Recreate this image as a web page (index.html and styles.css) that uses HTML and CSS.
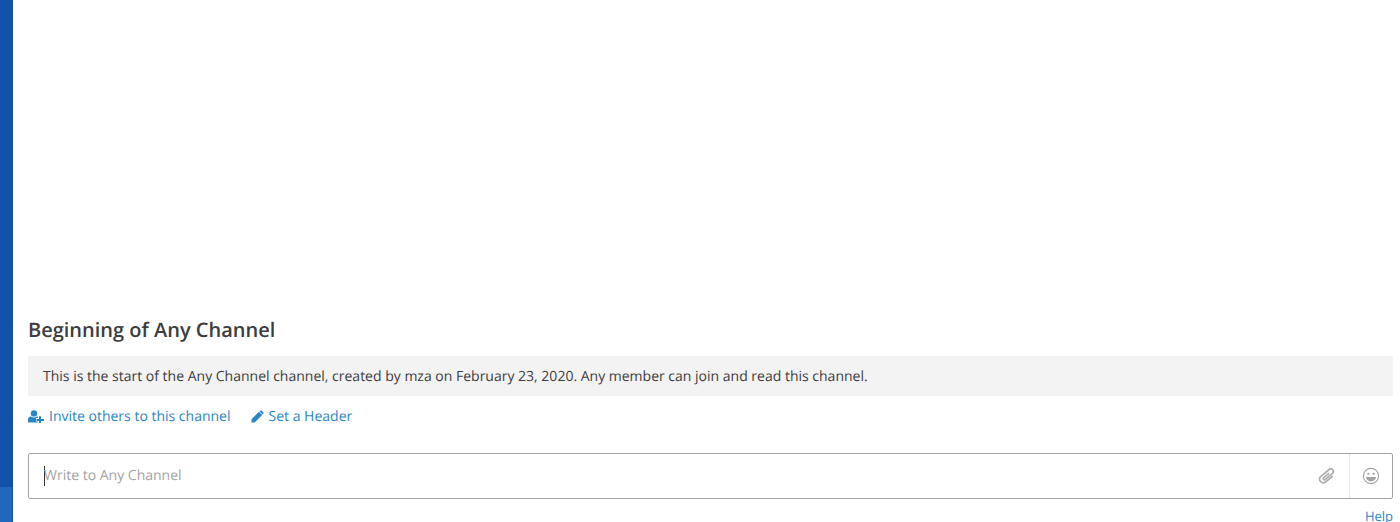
FILE: index.html
```html
<!DOCTYPE html>
<html lang="en">
<head>
    <meta charset="UTF-8">
    <title>Any Channel</title>
    <link rel="stylesheet" href="styles.css">
</head>
<body>
    <div class="app">
        <aside class="sidebar">
            <div class="sidebar-footer"></div>
        </aside>
        <main class="channel">
            <div class="intro">
                <h2 class="intro-title">Beginning of Any Channel</h2>
                <p class="intro-text">This is the start of the Any Channel channel, created by mza on February 23, 2020. Any member can join and read this channel.</p>
                <div class="intro-actions">
                    <a class="intro-link" href="#">
                        <svg class="icon-invite" viewBox="0 0 16 13" width="16" height="13" aria-hidden="true">
                            <circle cx="6" cy="3.4" r="3.2" fill="currentColor"/>
                            <path d="M0 12.500V9.600C0 7.800 1.400 6.600 3 6.600c.8.7 1.900 1 3 1s2.200-.3 3-1c.3 0 .6.100.9.200V8H8v3.500h1.900v1z" fill="currentColor"/>
                            <path d="M11 6.200h2v2.700h3v2h-3v2.700h-2v-2.700H8.500v-2H11z" fill="currentColor"/>
                        </svg>
                        <span>Invite others to this channel</span>
                    </a>
                    <a class="intro-link" href="#">
                        <svg class="icon-pencil" viewBox="0 0 13 13" width="13" height="13" aria-hidden="true">
                            <path d="M0.500 9.300L8 1.800l3.200 3.200-7.500 7.500H0.500zM8.900 0.900c.6-.6 1.400-.6 2 0l1.200 1.200c.6.6.6 1.400 0 2l-.4.400-3.200-3.200z" fill="currentColor"/>
                        </svg>
                        <span>Set a Header</span>
                    </a>
                </div>
            </div>
            <div class="composer">
                <div class="composer-input">
                    <span class="caret"></span>
                    <span class="placeholder">Write to Any Channel</span>
                </div>
                <div class="composer-attach">
                    <svg class="icon-clip" viewBox="-1 -1 20 20" width="18" height="18" aria-hidden="true">
                        <path transform="rotate(50 9 9)" d="M13 5V14.500a4 4 0 0 1-8 0V2.500a2.800 2.800 0 0 1 5.600 0V13a1.300 1.300 0 0 1-2.600 0V6" fill="none" stroke="currentColor" stroke-width="2" stroke-linecap="round"/>
                    </svg>
                </div>
                <div class="composer-emoji">
                    <svg viewBox="0 0 18 18" width="18" height="18" aria-hidden="true">
                        <circle cx="9" cy="9" r="7.600" fill="none" stroke="currentColor" stroke-width="1.100"/>
                        <circle cx="6.300" cy="6.800" r="1.100" fill="currentColor"/>
                        <circle cx="11.700" cy="6.800" r="1.100" fill="currentColor"/>
                        <path d="M4 10h10c0 2.600-2.200 4.300-5 4.300S4 12.600 4 10z" fill="currentColor"/>
                    </svg>
                </div>
            </div>
            <div class="composer-footer">
                <a class="help-link" href="#">Help</a>
            </div>
        </main>
    </div>
</body>
</html>
```

FILE: styles.css
```css
* {
    margin: 0;
    padding: 0;
    box-sizing: border-box;
}
html, body {
    height: 100%;
    overflow: hidden;
}
body {
    font-family: 'Open Sans', sans-serif;
    font-size: 14px;
    color: #3d3c40;
    background: #fff;
    text-rendering: geometricPrecision;
}
a {
    color: #2a85c8;
    text-decoration: none;
}
.app {
    display: flex;
    height: 522px;
    overflow: hidden;
}
.sidebar {
    flex: 0 0 13px;
    display: flex;
    flex-direction: column;
    justify-content: flex-end;
    background: #1153ab;
    border-right: 1px solid #1a4f96;
}
.sidebar-footer {
    height: 35px;
    background: #2167bf;
}
.channel {
    flex: 1;
    min-width: 0;
    display: flex;
    flex-direction: column;
    justify-content: flex-end;
    padding: 0 7px 0 15px;
}
.intro-title {
    font-size: 20px;
    font-weight: 600;
    line-height: 27px;
    margin-bottom: 13px;
}
.intro-text {
    height: 40px;
    padding: 1px 15px 0;
    line-height: 40px;
    background: #f3f3f3;
    border-radius: 2px;
}
.intro-actions {
    display: flex;
    gap: 20px;
    height: 40px;
    align-items: center;
    margin-bottom: 17px;
}
.intro-link {
    display: flex;
    align-items: center;
    gap: 5px;
}
.composer {
    display: flex;
    height: 46px;
    border: 1px solid #a3a3a3;
    border-radius: 2px;
}
.composer-input {
    flex: 1;
    display: flex;
    align-items: center;
    padding-left: 15px;
    padding-bottom: 1px;
}
.caret {
    width: 1px;
    height: 20px;
    background: #333;
}
.placeholder {
    margin-left: -1px;
    color: #a3a3a3;
}
.composer-attach {
    display: flex;
    align-items: center;
    justify-content: center;
    width: 44px;
    color: #b0b0b0;
}
.composer-emoji {
    display: flex;
    align-items: center;
    justify-content: center;
    width: 43px;
    border-left: 1px solid #e6e6e6;
    color: #a3a3a3;
}
.composer-footer {
    display: flex;
    justify-content: flex-end;
    height: 23px;
    padding-top: 8px;
    line-height: 19px;
    font-size: 13px;
}
.help-link {
    display: block;
}
```
